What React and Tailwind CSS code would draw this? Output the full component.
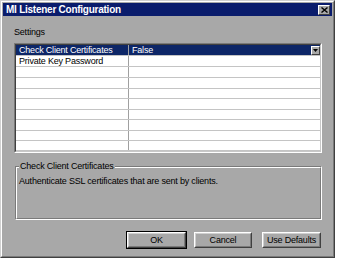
import React from "react";

const rows = [
  { k: "Check Client Certificates", v: "False", sel: true, h: "h-[11px]" },
  { k: "Private Key Password", v: "", h: "h-[11px]" },
  { k: "", v: "", h: "h-[11px]" },
  { k: "", v: "", h: "h-[11px]" },
  { k: "", v: "", h: "h-[10px]" },
  { k: "", v: "", h: "h-[11px]" },
  { k: "", v: "", h: "h-[10px]" },
  { k: "", v: "", h: "h-[11px]" },
  { k: "", v: "", h: "h-[10px]" },
  { k: "", v: "", h: "h-[10px]" },
];

function Btn({ children, def }) {
  return (
    <div className={def ? "border border-black" : "border border-transparent"}>
      <div className="border border-t-white border-l-white border-r-[#404040] border-b-[#404040]">
        <div className="h-[14px] flex items-center justify-center border border-t-[#d0d0d0] border-l-[#d0d0d0] border-r-[#7a7a7a] border-b-[#7a7a7a] text-black">
          {children}
        </div>
      </div>
    </div>
  );
}

export default function App() {
  return (
    <div
      className="w-[340px] h-[264px] bg-white text-[9px] tracking-[-0.2px] text-black leading-none"
      style={{ fontFamily: '"Liberation Sans", Arial, sans-serif' }}
    >
      <div className="w-[335px] h-[258px] border border-t-[#d0d0d0] border-l-[#d0d0d0] border-r-[#404040] border-b-[#404040] bg-[#a8a8a8]">
        <div className="h-full border border-t-white border-l-white border-r-[#7a7a7a] border-b-[#7a7a7a] p-px flex flex-col">
          {/* title bar */}
          <div className="h-[13px] bg-[#0a1c6c] flex items-center justify-between pl-[3px] pr-[2px]">
            <span className="text-white font-bold text-[10px] tracking-[-0.25px]">MI Listener Configuration</span>
            <div className="w-[12px] h-[10px] bg-[#a8a8a8] border border-t-white border-l-white border-r-[#404040] border-b-[#404040] flex items-center justify-center">
              <svg width="7" height="6" viewBox="0 0 7 6">
                <path d="M0.5 0.5 L6.5 5.5 M6.5 0.5 L0.5 5.5" stroke="#000" strokeWidth="1.4" />
              </svg>
            </div>
          </div>

          <div className="flex-1 pl-[11px] pr-[10px] flex flex-col">
            <div className="mt-[11px] h-[10px] flex items-center">Settings</div>

            {/* grid */}
            <div className="mt-[6px] w-[308px] border border-t-[#7a7a7a] border-l-[#7a7a7a] border-r-white border-b-white">
              <div className="border border-t-[#404040] border-l-[#404040] border-r-[#c8c8c8] border-b-[#c8c8c8] bg-white flex flex-col">
                {rows.map((r, i) => (
                  <div key={i} className={`${r.h} flex border-b border-[#c4c4c4]`}>
                    <div className={`w-[113px] border-r border-[#a0a0a0] pl-[3px] flex items-center ${r.sel ? "bg-[#0d2667] text-white" : ""}`}>
                      {r.k}
                    </div>
                    <div className={`flex-1 flex items-center pl-[3px] ${r.sel ? "bg-[#0d2667] text-white" : ""}`}>
                      <span className="flex-1">{r.v}</span>
                      {r.sel && (
                        <div className="w-[9px] h-[9px] bg-[#a8a8a8] border border-t-white border-l-white border-r-[#404040] border-b-[#404040] flex items-center justify-center">
                          <svg width="5" height="3" viewBox="0 0 5 3">
                            <path d="M0 0 H5 L2.5 3 Z" fill="#000" />
                          </svg>
                        </div>
                      )}
                    </div>
                  </div>
                ))}
              </div>
            </div>

            {/* group box */}
            <div className="mt-[13px] relative ml-px w-[307px] h-[54px] border border-t-[#7a7a7a] border-l-[#7a7a7a] border-r-white border-b-white">
              <div className="h-full border border-t-white border-l-white border-r-[#7a7a7a] border-b-[#7a7a7a] pl-[2px] pt-[9px]">
                Authenticate SSL certificates that are sent by clients.
              </div>
              <span className="absolute left-[3px] top-[-5px] bg-[#a8a8a8] px-px">Check Client Certificates</span>
            </div>

            {/* buttons */}
            <div className="mt-[11px] flex justify-end gap-[6px] pr-0">
              <div className="w-[61px]"><Btn def>OK</Btn></div>
              <div className="w-[60px] mr-[2px]"><Btn>Cancel</Btn></div>
              <div className="w-[61px]"><Btn>Use Defaults</Btn></div>
            </div>
          </div>
        </div>
      </div>
    </div>
  );
}
